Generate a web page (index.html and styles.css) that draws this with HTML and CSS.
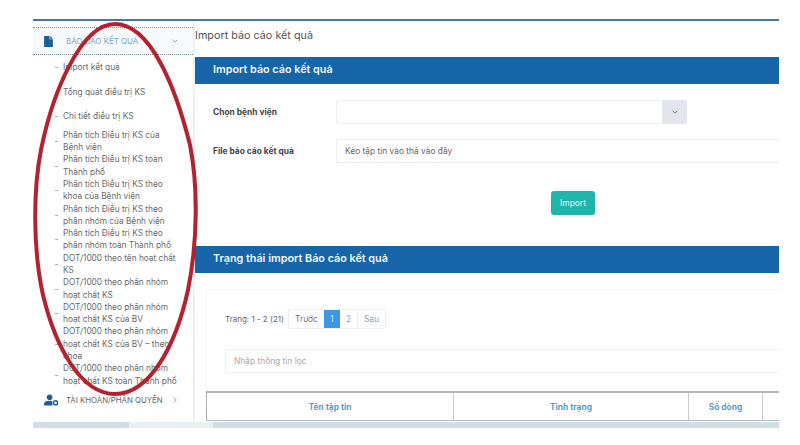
FILE: index.html
```html
<!DOCTYPE html>
<html lang="vi">
<head>
    <meta charset="UTF-8">
    <meta name="viewport" content="width=device-width, initial-scale=1.0">
    <title>Import báo cáo kết quả</title>
    <link rel="stylesheet" href="styles.css">
</head>
<body>

<div class="app">
    <div class="sidebar">
        <div class="nav-head active">
            <svg class="nav-icon" viewBox="0 0 16 20"><path d="M1 0h9v6h6v13a1 1 0 0 1-1 1H1a1 1 0 0 1-1-1V1a1 1 0 0 1 1-1zM11 0l5 5h-5z"/></svg>
            <span class="nav-label">BÁO CÁO KẾT QUẢ</span>
            <svg class="nav-caret" viewBox="0 0 10 6"><path d="M1 1l4 4 4-4"/></svg>
        </div>
        <ul class="nav-list">
            <li>Import kết quả</li>
            <li>Tổng quát điều trị KS</li>
            <li>Chi tiết điều trị KS</li>
            <li>Phân tích Điều trị KS của<br>Bệnh viện</li>
            <li>Phân tích Điều trị KS toàn<br>Thành phố</li>
            <li>Phân tích Điều trị KS theo<br>khoa của Bệnh viện</li>
            <li>Phân tích Điều trị KS theo<br>phân nhóm của Bệnh viện</li>
            <li>Phân tích Điều trị KS theo<br>phân nhóm toàn Thành phố</li>
            <li>DOT/1000 theo tên hoạt chất<br>KS</li>
            <li>DOT/1000 theo phân nhóm<br>hoạt chất KS</li>
            <li>DOT/1000 theo phân nhóm<br>hoạt chất KS của BV</li>
            <li>DOT/1000 theo phân nhóm<br>hoạt chất KS của BV – theo<br>khoa</li>
            <li>DOT/1000 theo phân nhóm<br>hoạt chất KS toàn Thành phố</li>
        </ul>
        <div class="nav-head">
            <svg class="nav-icon wide" viewBox="0 0 20 16"><circle cx="8" cy="4" r="4"/><path d="M0 15c0-5 3-6 8-6 2 0 3 .3 4 1v6H1a1 1 0 0 1-1-1z"/><circle cx="16.5" cy="12" r="3" fill="#fff" stroke="#1d5f94" stroke-width="2"/></svg>
            <span class="nav-label dark">TÀI KHOẢN/PHÂN QUYỀN</span>
            <svg class="nav-caret small" viewBox="0 0 6 10"><path d="M1 1l4 4-4 4"/></svg>
        </div>
    </div>

    <div class="content">
        <div class="page-title">Import báo cáo kết quả</div>

        <div class="card-head">Import báo cáo kết quả</div>
        <div class="form">
            <div class="form-row">
                <label>Chọn bệnh viện</label>
                <div class="select">
                    <div class="select-box"></div>
                    <div class="select-btn"><svg viewBox="0 0 10 6"><path d="M1 1l4 4 4-4"/></svg></div>
                </div>
            </div>
            <div class="form-row">
                <label>File báo cáo kết quả</label>
                <div class="drop">Kéo tập tin vào thả vào đây</div>
            </div>
            <div class="form-action"><button class="btn-import">Import</button></div>
        </div>

        <div class="card-head">Trạng thái import Báo cáo kết quả</div>
        <div class="status">
            <div class="panel">
                <div class="pager">
                    <span class="pager-text">Trang: 1 - 2 (21)</span>
                    <div class="pages">
                        <span class="page prev">Trước</span>
                        <span class="page current">1</span>
                        <span class="page num">2</span>
                        <span class="page next">Sau</span>
                    </div>
                </div>
                <div class="filter">Nhập thông tin lọc</div>
            </div>
            <table class="grid">
                <tr>
                    <th class="col-name">Tên tập tin</th>
                    <th class="col-state">Tình trạng</th>
                    <th class="col-rows">Số dòng</th>
                    <th></th>
                </tr>
            </table>
        </div>
    </div>
</div>
<div class="scrollbar"><span class="thumb"></span><span class="gap"></span><span class="rest"></span></div>

<!-- hand drawn annotation on top of the screenshot -->
<svg class="annotation" viewBox="0 0 800 445"><path d="M115 24C150 24 175 85 190 145C198 185 198 240 188 290C176 345 150 394 115 394C80 394 55 345 43 295C33 250 33 190 41 150C52 95 80 24 115 24Z"/></svg>

</body>
</html>
```

FILE: styles.css
```css
* {
    box-sizing: border-box;
}
body {
    margin: 0;
    background-color: #ffffff;
    font-family: "Inter", "Open Sans", sans-serif;
    color: #555;
    overflow: hidden;
}
.app {
    display: flex;
    width: 746px;
    height: 403px;
    margin: 19px 0 0 33px;
    border-top: 2px solid #47779a;
}
.sidebar {
    width: 162px;
    flex: none;
    padding-top: 6px;
    border-right: 2px solid #eef0f3;
}
.nav-head {
    display: flex;
    align-items: center;
    height: 28px;
    padding-left: 11px;
}
.nav-head.active {
    background-color: #f7fafc;
    border-top: 1px dotted #7c8a94;
    border-bottom: 1px dotted #7c8a94;
}
.nav-icon {
    width: 9px;
    height: 11px;
    fill: #1d5f94;
}
.nav-icon.wide {
    width: 14px;
    height: 12px;
}
.nav-label {
    margin-left: 13px;
    font-size: 7.9px;
    color: #7fa8c9;
    white-space: nowrap;
}
.nav-label.dark {
    margin-left: 8px;
    font-size: 7.8px;
    color: #666;
}
.nav-caret {
    margin-left: auto;
    margin-right: 15px;
    width: 6px;
    height: 6px;
    fill: none;
    stroke: #777;
    stroke-width: 1.2;
}
.nav-caret.small {
    margin-right: 16px;
    width: 4px;
}
.nav-list {
    list-style: none;
    margin: 0;
    padding: 0;
    height: 331px;
}
.nav-list li {
    position: relative;
    display: block;
    padding: 6.15px 0 6.15px 30px;
    font-size: 8.3px;
    line-height: 12.3px;
    white-space: nowrap;
    color: #6a6a6a;
}
.nav-list li:nth-child(n+4) {
    padding-top: 0;
    padding-bottom: 0;
}
.nav-list li::before {
    content: "";
    position: absolute;
    left: 22px;
    top: 50%;
    width: 3px;
    height: 1px;
    background-color: #aaa;
}
.content {
    flex: 1;
    min-width: 0;
}
.page-title {
    height: 36px;
    line-height: 30px;
    font-size: 10.8px;
    color: #555;
}
.card-head {
    height: 27px;
    line-height: 26px;
    padding-left: 18px;
    background-color: #1565a8;
    color: #f2f7fb;
    font-size: 10.8px;
    font-weight: 600;
}
.form {
    height: 162px;
    padding-top: 16px;
}
.form-row {
    display: flex;
    align-items: center;
    height: 24px;
    margin-bottom: 15px;
    padding-left: 18px;
}
.form-row label {
    width: 123px;
    flex: none;
    font-size: 8.4px;
    font-weight: 700;
    color: #444;
}
.select {
    display: flex;
    width: 351px;
    height: 24px;
}
.select-box {
    flex: 1;
    border: 1px solid #eceef1;
    border-right: none;
    border-radius: 3px 0 0 3px;
}
.select-btn {
    display: flex;
    align-items: center;
    justify-content: center;
    width: 25px;
    background-color: #e4e6ee;
    border-radius: 0 3px 3px 0;
}
.select-btn svg {
    width: 6px;
    height: 4px;
    fill: none;
    stroke: #666;
    stroke-width: 1.5;
}
.drop {
    flex: 1;
    height: 24px;
    line-height: 22px;
    padding-left: 8px;
    border: 1px solid #eceef1;
    border-right: none;
    font-size: 8.4px;
    color: #666;
}
.form-action {
    display: flex;
    justify-content: center;
    padding: 13px 0 0 172px;
}
.btn-import {
    width: 44px;
    height: 24px;
    padding: 0;
    border: none;
    border-radius: 3px;
    background-color: #1fb5ad;
    color: #eaf8f7;
    font-family: inherit;
    font-size: 8.4px;
}
.status {
    padding: 16px 0 0 11px;
}
.panel {
    height: 102px;
    padding: 19px 0 0 18px;
    border-top: 1px solid #f1f3f5;
    border-left: 1px solid #f1f3f5;
}
.pager {
    display: flex;
    align-items: center;
    height: 20px;
}
.pager-text {
    width: 63px;
    flex: none;
    font-size: 8px;
    color: #666;
    white-space: nowrap;
}
.pages {
    display: flex;
    height: 20px;
    border: 1px solid #eef1f4;
    border-radius: 2px;
}
.page {
    display: flex;
    align-items: center;
    justify-content: center;
    height: 100%;
    font-size: 8.4px;
    color: #8aa5bd;
}
.page.prev {
    width: 35px;
    color: #777;
}
.page.current {
    width: 16px;
    background-color: #3c97e6;
    color: #d8ecfb;
}
.page.num {
    width: 17px;
}
.page.next {
    width: 28px;
    border-left: 1px solid #eef1f4;
}
.filter {
    height: 24px;
    line-height: 22px;
    margin-top: 20px;
    padding-left: 8px;
    border: 1px solid #eef0f3;
    border-right: none;
    border-radius: 2px 0 0 2px;
    font-size: 8.4px;
    color: #aaa;
}
.grid {
    width: 100%;
    height: 30px;
    border-collapse: collapse;
    table-layout: fixed;
    border-top: 2px solid #b4b7ba;
    border-bottom: 1px solid #b4c0c6;
    border-left: 1px solid #a9b0b5;
}
.grid th {
    padding: 0;
    border-right: 1px solid #c8cbce;
    font-size: 8.4px;
    font-weight: 700;
    color: #5b9bc9;
}
.grid th:last-child {
    border-right: none;
}
.col-name {
    width: 247px;
}
.col-state {
    width: 235px;
}
.col-rows {
    width: 74px;
}
.scrollbar {
    display: flex;
    width: 746px;
    height: 6px;
    margin-left: 33px;
}
.thumb {
    width: 96px;
    background-color: #cfdfe3;
}
.gap {
    width: 84px;
    background-color: #e9f0f2;
}
.rest {
    flex: 1;
    background-color: #cfdfe3;
}
.annotation {
    position: absolute;
    left: 0;
    top: 0;
    width: 800px;
    height: 445px;
    fill: none;
    stroke: #b3232f;
    stroke-width: 4;
    pointer-events: none;
}
```
